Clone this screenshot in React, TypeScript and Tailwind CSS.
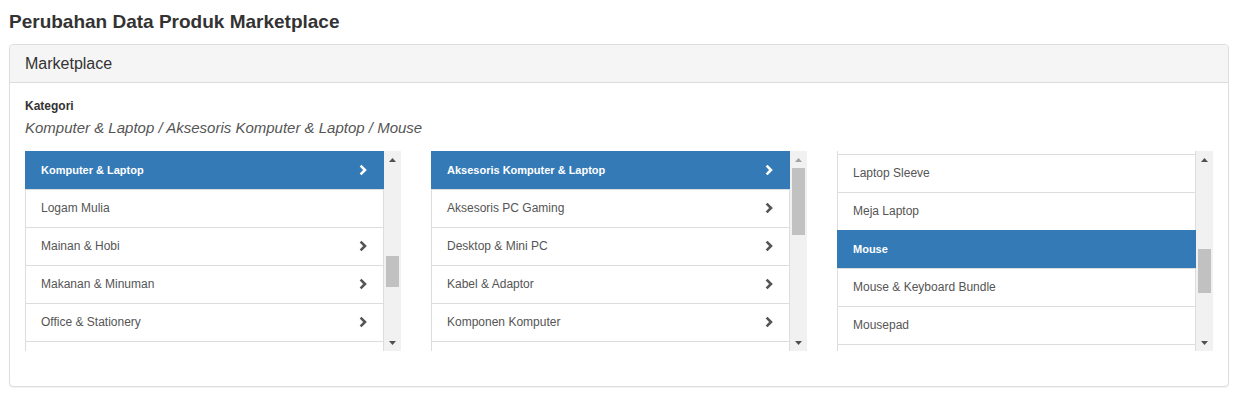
import React from 'react';

type Item = { label: string; active?: boolean; hasChild?: boolean };

const col1: Item[] = [
  { label: 'Komputer & Laptop', active: true, hasChild: true },
  { label: 'Logam Mulia' },
  { label: 'Mainan & Hobi', hasChild: true },
  { label: 'Makanan & Minuman', hasChild: true },
  { label: 'Office & Stationery', hasChild: true },
  { label: 'Olahraga', hasChild: true },
];

const col2: Item[] = [
  { label: 'Aksesoris Komputer & Laptop', active: true, hasChild: true },
  { label: 'Aksesoris PC Gaming', hasChild: true },
  { label: 'Desktop & Mini PC', hasChild: true },
  { label: 'Kabel & Adaptor', hasChild: true },
  { label: 'Komponen Komputer', hasChild: true },
  { label: 'Laptop', hasChild: true },
];

const col3: Item[] = [
  { label: 'Laptop Sleeve' },
  { label: 'Meja Laptop' },
  { label: 'Mouse', active: true },
  { label: 'Mouse & Keyboard Bundle' },
  { label: 'Mousepad' },
  { label: 'Mouse Bungee' },
];

const Chevron = ({ color }: { color: string }) => (
  <svg width="8" height="12" viewBox="0 0 8 12" fill="none">
    <path d="M1.6 1.6 L6 6 L1.6 10.4" stroke={color} strokeWidth="2.6" strokeLinejoin="miter" />
  </svg>
);

const Arrow = ({ up, color }: { up?: boolean; color: string }) => (
  <svg width="7" height="4" viewBox="0 0 7 4">
    {up ? <polygon points="0,4 7,4 3.5,0" fill={color} /> : <polygon points="0,0 7,0 3.5,4" fill={color} />}
  </svg>
);

const Row = ({ item }: { item: Item }) => (
  <div
    className={
      item.active
        ? 'h-[38px] shrink-0 flex items-center justify-between pl-[16px] pr-[17px] pb-[1px] bg-[#337ab7] border-t border-[#337ab7] text-white font-bold text-[11px]'
        : 'h-[38px] shrink-0 flex items-center justify-between pl-[15px] pr-[16px] pb-[1px] border-x border-t border-[#ddd] bg-white text-[#555] text-[12px]'
    }
  >
    <span>{item.label}</span>
    {item.hasChild && <Chevron color={item.active ? '#fff' : '#555'} />}
  </div>
);

const Scrollbar = ({ thumb, upDisabled }: { thumb: string; upDisabled?: boolean }) => (
  <div className="w-[17px] shrink-0 bg-[#f1f1f1] flex flex-col">
    <div className="h-[17px] flex items-center justify-center">
      <Arrow up color={upDisabled ? '#a3a3a3' : '#505050'} />
    </div>
    <div className="flex-1 px-[2px]">
      <div className={thumb} />
    </div>
    <div className="h-[17px] flex items-center justify-center">
      <Arrow color="#505050" />
    </div>
  </div>
);

const CategoryList = ({ items, thumb, upDisabled, partialTop }: { items: Item[]; thumb: string; upDisabled?: boolean; partialTop?: boolean }) => (
  <div className="h-[200px] flex">
    <div className="flex-1 overflow-hidden flex flex-col">
      {partialTop && <div className="h-[3px] shrink-0 border-x border-[#ddd]" />}
      {items.map((it) => (
        <Row key={it.label} item={it} />
      ))}
    </div>
    <Scrollbar thumb={thumb} upDisabled={upDisabled} />
  </div>
);

export default function App() {
  return (
    <div className="min-h-[396px] bg-white pl-[9px] pr-[10px] pt-[11px] text-[#333]" style={{ fontFamily: '"Liberation Sans", Arial, sans-serif' }}>
      <h1 className="text-[19px] font-bold leading-[22px] mb-[11px]">Perubahan Data Produk Marketplace</h1>
      <div className="border border-[#ddd] rounded-[4px] bg-white shadow-[0_1px_1px_rgba(0,0,0,0.05)]">
        <div className="h-[38px] bg-[#f5f5f5] border-b border-[#ddd] rounded-t-[4px] px-[15px] flex items-center text-[16px]">
          Marketplace
        </div>
        <div className="px-[15px] pt-[15px] pb-[35px]">
          <div className="text-[12px] font-bold leading-[17px]">Kategori</div>
          <div className="text-[15px] italic leading-[20px] text-[#555] mt-[3px] mb-[13px]">
            Komputer &amp; Laptop / Aksesoris Komputer &amp; Laptop / Mouse
          </div>
          <div className="grid grid-cols-3 gap-x-[30px]">
            <CategoryList items={col1} thumb="mt-[88px] h-[31px] bg-[#c1c1c1]" />
            <CategoryList items={col2} thumb="mt-0 h-[67px] bg-[#c1c1c1]" upDisabled />
            <CategoryList items={col3} thumb="mt-[81px] h-[44px] bg-[#c1c1c1]" partialTop />
          </div>
        </div>
      </div>
    </div>
  );
}
